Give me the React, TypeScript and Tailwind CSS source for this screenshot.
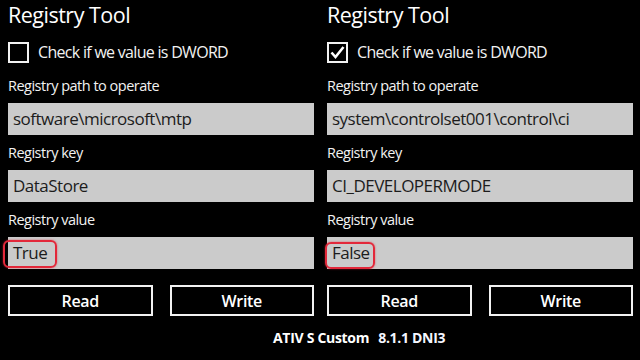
import type { ReactNode } from "react"

type Panel = {
    checked: boolean
    path: string
    keyName: string
    value: string
    mark: string
}

const panels: Panel[] = [
    {
        checked: false,
        path: "software\\microsoft\\mtp",
        keyName: "DataStore",
        value: "True",
        mark: "left-[-5px] top-[3px] w-[54px] h-[28px]",
    },
    {
        checked: true,
        path: "system\\controlset001\\control\\ci",
        keyName: "CI_DEVELOPERMODE",
        value: "False",
        mark: "left-[-2px] top-[5px] w-[50px] h-[27px]",
    },
]

function Label({ children, first }: { children: ReactNode; first?: boolean }) {
    return (
        <div
            className={`${first ? "mt-[13px]" : "mt-[8px]"} text-[14.5px] leading-[20px] tracking-[-0.5px] text-[#f2f2f2]`}
        >
            {children}
        </div>
    )
}

function Field({ children, mark }: { children: ReactNode; mark?: string }) {
    return (
        <div className="relative mt-[7px] h-[32px] bg-[#cbcbcb] pl-[5px] text-[17px] leading-[32px] tracking-[-0.5px] text-[#1c1c1c]">
            {children}
            {mark && (
                <div
                    className={`absolute ${mark} rounded-[6px] border-2 border-[#e3283a] shadow-[0_0_2px_rgba(227,40,58,0.7)]`}
                />
            )}
        </div>
    )
}

function Checkbox({ checked }: { checked: boolean }) {
    return (
        <div className="flex h-[21px] w-[21px] items-center justify-center border-2 border-[#f2f2f2]">
            {checked && (
                <svg width="17" height="17" viewBox="0 0 17 17">
                    <path d="M2.5 8.5 L6.5 13 L14.5 3" fill="none" stroke="#ffffff" strokeWidth="2.6" />
                </svg>
            )}
        </div>
    )
}

function RegistryPanel({ panel }: { panel: Panel }) {
    return (
        <div className="flex flex-col">
            <h1 className="text-[21.5px] leading-[30px] tracking-[-0.5px] text-white">Registry Tool</h1>
            <div className="mt-[12px] flex items-center gap-[9px]">
                <Checkbox checked={panel.checked} />
                <span className="text-[16px] leading-[21px] tracking-[-0.7px] text-[#f2f2f2]">
                    Check if we value is DWORD
                </span>
            </div>

            <Label first>Registry path to operate</Label>
            <Field>{panel.path}</Field>

            <Label>Registry key</Label>
            <Field>{panel.keyName}</Field>

            <Label>Registry value</Label>
            <Field mark={panel.mark}>{panel.value}</Field>

            <div className="mt-[16px] grid grid-cols-2 gap-[17px]">
                <button className="h-[31px] border-2 border-[#f2f2f2] text-[16px] font-semibold tracking-[-0.3px] text-white">
                    Read
                </button>
                <button className="h-[31px] border-2 border-[#f2f2f2] text-[16px] font-semibold tracking-[-0.3px] text-white">
                    Write
                </button>
            </div>
        </div>
    )
}

export default function App() {
    return (
        <div
            className="h-[360px] w-[640px] overflow-hidden bg-black"
            style={{ fontFamily: '"Open Sans", "Noto Sans", sans-serif' }}
        >
            <div className="grid grid-cols-2 gap-[13px] pl-[8px] pr-[7px]">
                {panels.map((p, i) => (
                    <RegistryPanel key={i} panel={p} />
                ))}
            </div>
            <div className="mt-[12px] flex gap-[9px] pl-[273px] text-[14px] font-bold leading-[20px] tracking-[-0.3px] text-white">
                <span>ATIV S Custom</span>
                <span className="text-[#f4f6ff]">8.1.1 DNI3</span>
            </div>
        </div>
    )
}
